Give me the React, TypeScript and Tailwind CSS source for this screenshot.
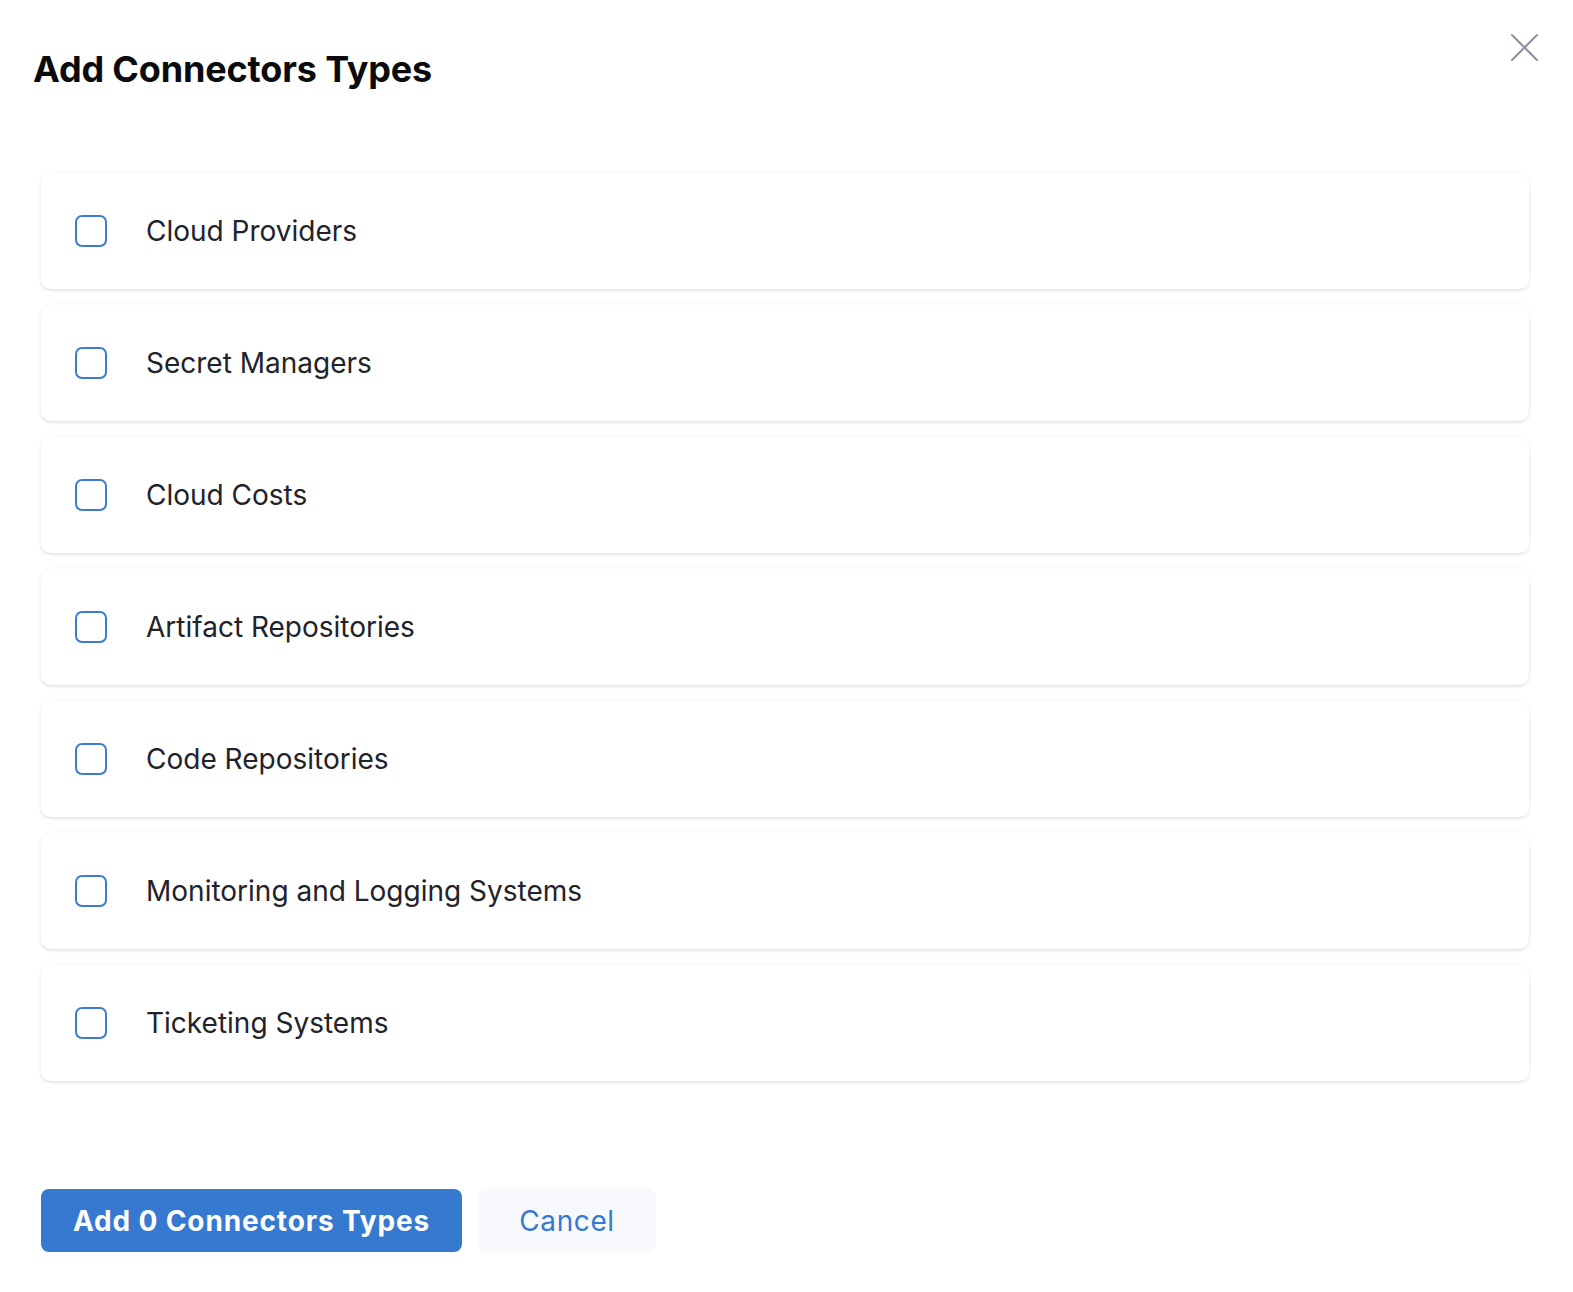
import React from "react";

const items = [
  "Cloud Providers",
  "Secret Managers",
  "Cloud Costs",
  "Artifact Repositories",
  "Code Repositories",
  "Monitoring and Logging Systems",
  "Ticketing Systems",
];

export default function App() {
  return (
    <div
      className="relative w-[1573px] h-[1292px] bg-white overflow-hidden"
      style={{ fontFamily: "Inter, 'Noto Sans', sans-serif" }}
    >
      <button className="absolute left-[1508px] top-[31px] w-[31px] h-[31px] flex items-center justify-center">
        <svg width="30" height="30" viewBox="0 0 30 30" fill="none">
          <path d="M3 3L28 28M28 3L3 28" stroke="#8e8fa6" strokeWidth="2" strokeLinecap="round" />
        </svg>
      </button>
      <div className="flex flex-col h-full">
        <div className="pl-[33px] pt-[44px] h-[173px]">
          <h1 className="text-[36px] leading-[50px] font-bold text-[#0b0b0d] tracking-[-0.15px]">
            Add Connectors Types
          </h1>
        </div>
        <div className="flex flex-col gap-[16px] pl-[41px] pr-[44px]">
          {items.map((t) => (
            <label
              key={t}
              className="flex items-center h-[116px] rounded-[10px] bg-white shadow-[0_2px_3px_rgba(0,0,0,0.09),0_0_6px_rgba(0,0,0,0.04)] pl-[34px]"
            >
              <span className="w-[32px] h-[32px] rounded-[7px] border-2 border-[#3b7bd1] bg-white shrink-0" />
              <span className="ml-[39px] text-[28px] text-[#22222a] leading-none">{t}</span>
            </label>
          ))}
        </div>
        <div className="flex gap-[17px] pl-[41px] mt-[108px]">
          <button className="h-[63px] w-[421px] rounded-[8px] bg-[#3579d0] text-white text-[28px] font-bold tracking-[0.85px]">
            Add 0 Connectors Types
          </button>
          <button className="h-[63px] w-[176px] rounded-[8px] bg-[#f8f9fc] shadow-[0_0_3px_rgba(0,0,0,0.05)] text-[#3579d0] text-[28px] tracking-[0.6px]">
            Cancel
          </button>
        </div>
      </div>
    </div>
  );
}
